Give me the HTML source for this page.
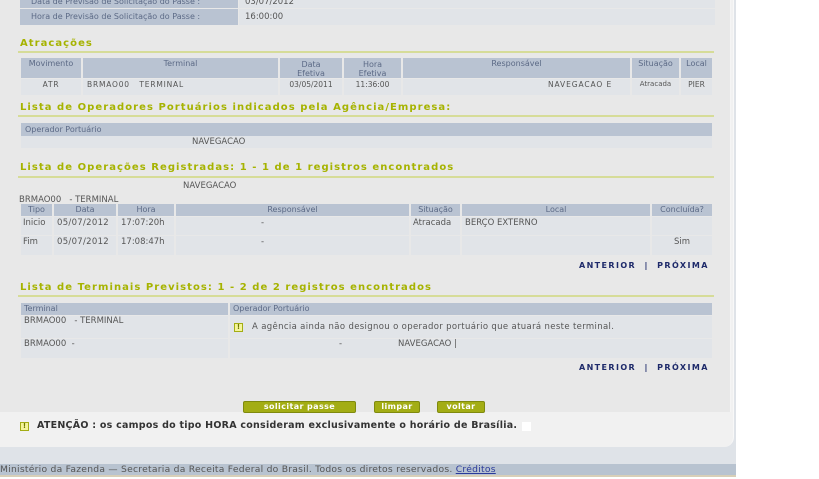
<!DOCTYPE html>
<html><head><meta charset="utf-8"><style>
*{margin:0;padding:0;box-sizing:border-box}
body{width:819px;height:479px;background:#fff;font-family:"DejaVu Sans","Liberation Sans",sans-serif;font-size:8.5px;color:#555;position:relative;overflow:hidden}
.a{position:absolute;white-space:nowrap;overflow:visible}
.outer{left:0;top:0;width:736px;height:465px;background:#dfe3e8}
.panel{left:0;top:0;width:734px;height:447px;background:#f1f1f1;border-right:1px solid #f8f8f8;border-bottom-right-radius:10px}
.inner{left:0;top:0;width:731px;height:412px;background:#e8e8e8;border-right:1px solid #f5f5f5}
.h{background:#b9c3d2;color:#5c6a86;text-align:center;font-size:8px}
.d{background:#e1e4e8}
.t{color:#a6b300;font-weight:bold;font-size:10px;letter-spacing:1.05px}
.ln{height:2px;background:#d6dc98;left:18px;width:696px}
.nav{font-weight:bold;color:#1e2a6a;font-size:8px;letter-spacing:1.4px}
.btn{background:#a3ad14;color:#fff;font-weight:bold;font-size:8px;text-align:center;border:1px solid #7f8a0e;border-radius:2px;line-height:10px;letter-spacing:.4px}
.ic{width:9px;height:9px;border:1px solid #a3ad14;background:#f4f49a;color:#707a00;font-size:7px;line-height:7px;text-align:center;font-weight:bold}
</style></head><body>
<div class="a outer"></div>
<div class="a panel"></div>
<div class="a inner"></div>

<div class="a h" style="left:20px;top:0;width:218px;height:8px;text-align:left;padding-left:11px;line-height:4px">Data de Previsão de Solicitação do Passe :</div>
<div class="a d" style="left:239px;top:0;width:476px;height:8px;padding-left:6px;line-height:4px">03/07/2012</div>
<div class="a h" style="left:20px;top:9px;width:218px;height:16px;text-align:left;padding-left:11px;line-height:16px">Hora de Previsão de Solicitação do Passe :</div>
<div class="a d" style="left:239px;top:9px;width:476px;height:16px;padding-left:6px;line-height:16px">16:00:00</div>

<div class="a t" style="left:20px;top:38px">Atracações</div>
<div class="a ln" style="top:51px"></div>
<div class="a h" style="left:21px;top:58px;width:60px;height:20px;line-height:12px">Movimento</div>
<div class="a h" style="left:83px;top:58px;width:195px;height:20px;line-height:12px">Terminal</div>
<div class="a h" style="left:280px;top:58px;width:62px;height:20px;line-height:9px;padding-top:2px">Data<br>Efetiva</div>
<div class="a h" style="left:344px;top:58px;width:57px;height:20px;line-height:9px;padding-top:2px">Hora<br>Efetiva</div>
<div class="a h" style="left:403px;top:58px;width:227px;height:20px;line-height:12px">Responsável</div>
<div class="a h" style="left:632px;top:58px;width:47px;height:20px;line-height:12px">Situação</div>
<div class="a h" style="left:681px;top:58px;width:31px;height:20px;line-height:12px">Local</div>
<div class="a d" style="left:21px;top:79px;width:60px;height:16px;text-align:center;line-height:11px;font-size:7.5px;letter-spacing:.8px">ATR</div>
<div class="a d" style="left:83px;top:79px;width:195px;height:16px;padding-left:4px;line-height:11px;font-size:7.5px;letter-spacing:.8px">BRMAO00 &nbsp; TERMINAL</div>
<div class="a d" style="left:280px;top:79px;width:62px;height:16px;text-align:center;line-height:11px;font-size:7.5px">03/05/2011</div>
<div class="a d" style="left:344px;top:79px;width:57px;height:16px;text-align:center;line-height:11px;font-size:7.5px">11:36:00</div>
<div class="a d" style="left:403px;top:79px;width:227px;height:16px;line-height:11px;font-size:7.5px;padding-left:145px;letter-spacing:.9px">NAVEGACAO E</div>
<div class="a d" style="left:632px;top:79px;width:47px;height:16px;text-align:center;line-height:11px;font-size:7px">Atracada</div>
<div class="a d" style="left:681px;top:79px;width:31px;height:16px;text-align:center;line-height:11px;font-size:7.5px">PIER</div>

<div class="a t" style="left:20px;top:102px">Lista de Operadores Portuários indicados pela Agência/Empresa:</div>
<div class="a ln" style="top:115px"></div>
<div class="a h" style="left:21px;top:123px;width:691px;height:13px;text-align:left;padding-left:4px;line-height:13px">Operador Portuário</div>
<div class="a d" style="left:21px;top:136px;width:691px;height:12px;padding-left:171px;line-height:12px">NAVEGACAO</div>

<div class="a t" style="left:20px;top:162px">Lista de Operações Registradas: 1 - 1 de 1 registros encontrados</div>
<div class="a ln" style="top:176px"></div>
<div class="a" style="left:183px;top:181px">NAVEGACAO</div>
<div class="a" style="left:19px;top:195px">BRMAO00 &nbsp; - TERMINAL</div>
<div class="a h" style="left:21px;top:204px;width:31px;height:12px;line-height:12px">Tipo</div>
<div class="a h" style="left:54px;top:204px;width:62px;height:12px;line-height:12px">Data</div>
<div class="a h" style="left:118px;top:204px;width:56px;height:12px;line-height:12px">Hora</div>
<div class="a h" style="left:176px;top:204px;width:233px;height:12px;line-height:12px">Responsável</div>
<div class="a h" style="left:411px;top:204px;width:49px;height:12px;line-height:12px">Situação</div>
<div class="a h" style="left:462px;top:204px;width:188px;height:12px;line-height:12px">Local</div>
<div class="a h" style="left:652px;top:204px;width:60px;height:12px;line-height:12px">Concluída?</div>
<div class="a d" style="left:21px;top:217px;width:31px;height:18px;padding-left:2px;line-height:12px">Inicio</div>
<div class="a d" style="left:54px;top:217px;width:62px;height:18px;padding-left:3px;line-height:12px;letter-spacing:.3px">05/07/2012</div>
<div class="a d" style="left:118px;top:217px;width:56px;height:18px;padding-left:3px;line-height:12px">17:07:20h</div>
<div class="a d" style="left:176px;top:217px;width:233px;height:18px;padding-left:85px;line-height:12px">-</div>
<div class="a d" style="left:411px;top:217px;width:49px;height:18px;padding-left:2px;line-height:12px">Atracada</div>
<div class="a d" style="left:462px;top:217px;width:188px;height:18px;padding-left:3px;line-height:12px">BERÇO EXTERNO</div>
<div class="a d" style="left:652px;top:217px;width:60px;height:18px"></div>
<div class="a d" style="left:21px;top:236px;width:31px;height:19px;padding-left:2px;line-height:12px">Fim</div>
<div class="a d" style="left:54px;top:236px;width:62px;height:19px;padding-left:3px;line-height:12px;letter-spacing:.3px">05/07/2012</div>
<div class="a d" style="left:118px;top:236px;width:56px;height:19px;padding-left:3px;line-height:12px">17:08:47h</div>
<div class="a d" style="left:176px;top:236px;width:233px;height:19px;padding-left:85px;line-height:12px">-</div>
<div class="a d" style="left:411px;top:236px;width:49px;height:19px"></div>
<div class="a d" style="left:462px;top:236px;width:188px;height:19px"></div>
<div class="a d" style="left:652px;top:236px;width:60px;height:19px;text-align:center;line-height:12px">Sim</div>
<div class="a nav" style="left:579px;top:261px">ANTERIOR &nbsp;| &nbsp;PRÓXIMA</div>

<div class="a t" style="left:20px;top:282px">Lista de Terminais Previstos: 1 - 2 de 2 registros encontrados</div>
<div class="a ln" style="top:295px"></div>
<div class="a h" style="left:21px;top:303px;width:207px;height:12px;text-align:left;padding-left:3px;line-height:12px">Terminal</div>
<div class="a h" style="left:230px;top:303px;width:482px;height:12px;text-align:left;padding-left:3px;line-height:12px">Operador Portuário</div>
<div class="a d" style="left:21px;top:316px;width:207px;height:22px;padding-left:3px;line-height:11px">BRMAO00 &nbsp; - TERMINAL</div>
<div class="a d" style="left:230px;top:316px;width:482px;height:22px"></div>
<div class="a ic" style="left:234px;top:323px">!</div>
<div class="a" style="left:252px;top:322px;letter-spacing:.35px">A agência ainda não designou o operador portuário que atuará neste terminal.</div>
<div class="a d" style="left:21px;top:339px;width:207px;height:19px;padding-left:3px;line-height:11px">BRMAO00 &nbsp;-</div>
<div class="a d" style="left:230px;top:339px;width:482px;height:19px;line-height:11px"></div>
<div class="a" style="left:339px;top:339px;line-height:11px">-</div>
<div class="a" style="left:398px;top:339px;line-height:11px">NAVEGACAO |</div>
<div class="a nav" style="left:579px;top:363px">ANTERIOR &nbsp;| &nbsp;PRÓXIMA</div>

<div class="a btn" style="left:243px;top:401px;width:113px;height:12px">solicitar passe</div>
<div class="a btn" style="left:374px;top:401px;width:46px;height:12px">limpar</div>
<div class="a btn" style="left:437px;top:401px;width:48px;height:12px">voltar</div>
<div class="a ic" style="left:20px;top:422px">!</div>
<div class="a" style="left:37px;top:420px;font-weight:bold;color:#333;font-size:9.5px;letter-spacing:.25px">ATENÇÃO : os campos do tipo HORA consideram exclusivamente o horário de Brasília.</div>
<div class="a" style="left:522px;top:422px;width:9px;height:9px;background:#fff"></div>

<div class="a" style="left:0;top:464px;width:736px;height:11px;background:#b8c3d0;font-size:9.2px;line-height:11px;color:#555;letter-spacing:.25px">Ministério da Fazenda — Secretaria da Receita Federal do Brasil. Todos os diretos reservados. <span style="color:#2a3a9a;text-decoration:underline">Créditos</span></div>
<div class="a" style="left:0;top:475px;width:736px;height:2px;background:#d8cfb8"></div>
</body></html>
